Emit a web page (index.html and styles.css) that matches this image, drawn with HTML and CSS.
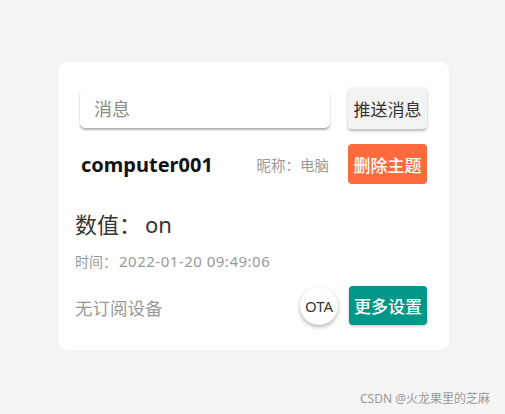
FILE: index.html
```html
<!DOCTYPE html>
<html lang="zh-CN">
<head>
    <meta charset="UTF-8">
    <meta name="viewport" content="width=device-width, initial-scale=1.0">
    <title>设备</title>
    <link rel="stylesheet" href="styles.css">
</head>
<body>
    <div class="page">
        <div class="card">
            <div class="send-row">
                <input class="msg-input" type="text" placeholder="消息">
                <button class="btn btn-light">推送消息</button>
            </div>
            <div class="topic-row">
                <span class="topic-name">computer001</span>
                <span class="nickname">昵称：电脑</span>
                <button class="btn btn-orange">删除主题</button>
            </div>
            <div class="value">数值：<span class="value-text">on</span></div>
            <div class="time">时间：<span class="time-text">2022-01-20 09:49:06</span></div>
            <div class="bottom-row">
                <span class="no-device">无订阅设备</span>
                <button class="ota">OTA</button>
                <button class="btn btn-teal">更多设置</button>
            </div>
        </div>
        <div class="footer">CSDN @火龙果里的芝麻</div>
    </div>
</body>
</html>
```

FILE: styles.css
```css
body {
    margin: 0;
    background-color: #f4f4f4;
    font-family: "Noto Sans", "Noto Sans CJK SC", sans-serif;
    color: #333;
}

.page {
    padding: 62px 15px 0 58px;
}

.card {
    width: 352px;
    background-color: #fff;
    border-radius: 9px;
    padding: 25px 22px 25px 17px;
}

.send-row {
    display: flex;
    align-items: center;
    margin-left: 5px;
}

.msg-input {
    width: 250px;
    height: 39px;
    box-sizing: border-box;
    border: none;
    border-radius: 5px;
    padding: 2px 14px 0;
    font-family: inherit;
    font-size: 18px;
    color: #333;
    background: #fff;
    box-shadow: 0 2px 2px rgba(0, 0, 0, 0.3), 0 0 1px rgba(0, 0, 0, 0.08);
    outline: none;
}

.msg-input::placeholder {
    color: #8a8a8a;
}

.btn {
    width: 79px;
    height: 40px;
    margin-left: auto;
    border: none;
    border-radius: 4px;
    padding: 0;
    font-family: inherit;
    font-size: 17px;
    white-space: nowrap;
}

.btn-light {
    height: 42px;
    background-color: #f3f3f3;
    color: #333;
    box-shadow: 0 2px 3px rgba(0, 0, 0, 0.28);
}

.btn-orange {
    background-color: #ff6b3d;
    color: #fff;
    font-weight: 500;
}

.btn-teal {
    width: 78px;
    height: 39px;
    margin-left: 11px;
    background-color: #009688;
    color: #fff;
    font-weight: 500;
    box-shadow: 0 1px 3px rgba(0, 0, 0, 0.25);
}

.topic-row {
    display: flex;
    align-items: center;
    margin: 15px 0 0 6px;
}

.topic-name {
    font-size: 20px;
    font-weight: 700;
    color: #111;
}

.nickname {
    margin-left: auto;
    margin-right: 19px;
    font-size: 14.5px;
    color: #999;
}

.topic-row .btn {
    margin-left: 0;
}

.value {
    margin-top: 25px;
    font-size: 22px;
    line-height: 30px;
    color: #333;
}

.value-text {
    margin-left: 4px;
}

.time {
    margin-top: 12px;
    font-size: 14px;
    line-height: 20px;
    color: #999;
}

.time-text {
    margin-left: 2px;
    font-size: 15px;
    letter-spacing: 0.5px;
}

.bottom-row {
    display: flex;
    align-items: center;
    margin-top: 14px;
}

.no-device {
    margin-top: 3px;
    font-size: 17.5px;
    color: #999;
}

.ota {
    width: 38px;
    height: 38px;
    margin-left: auto;
    border: none;
    border-radius: 50%;
    padding: 0;
    background-color: #fff;
    font-family: inherit;
    font-size: 15px;
    color: #333;
    box-shadow: 0 2px 4px rgba(0, 0, 0, 0.3);
}

.footer {
    margin-top: 41px;
    text-align: right;
    font-size: 12px;
    line-height: 16px;
    color: #999;
}
```
